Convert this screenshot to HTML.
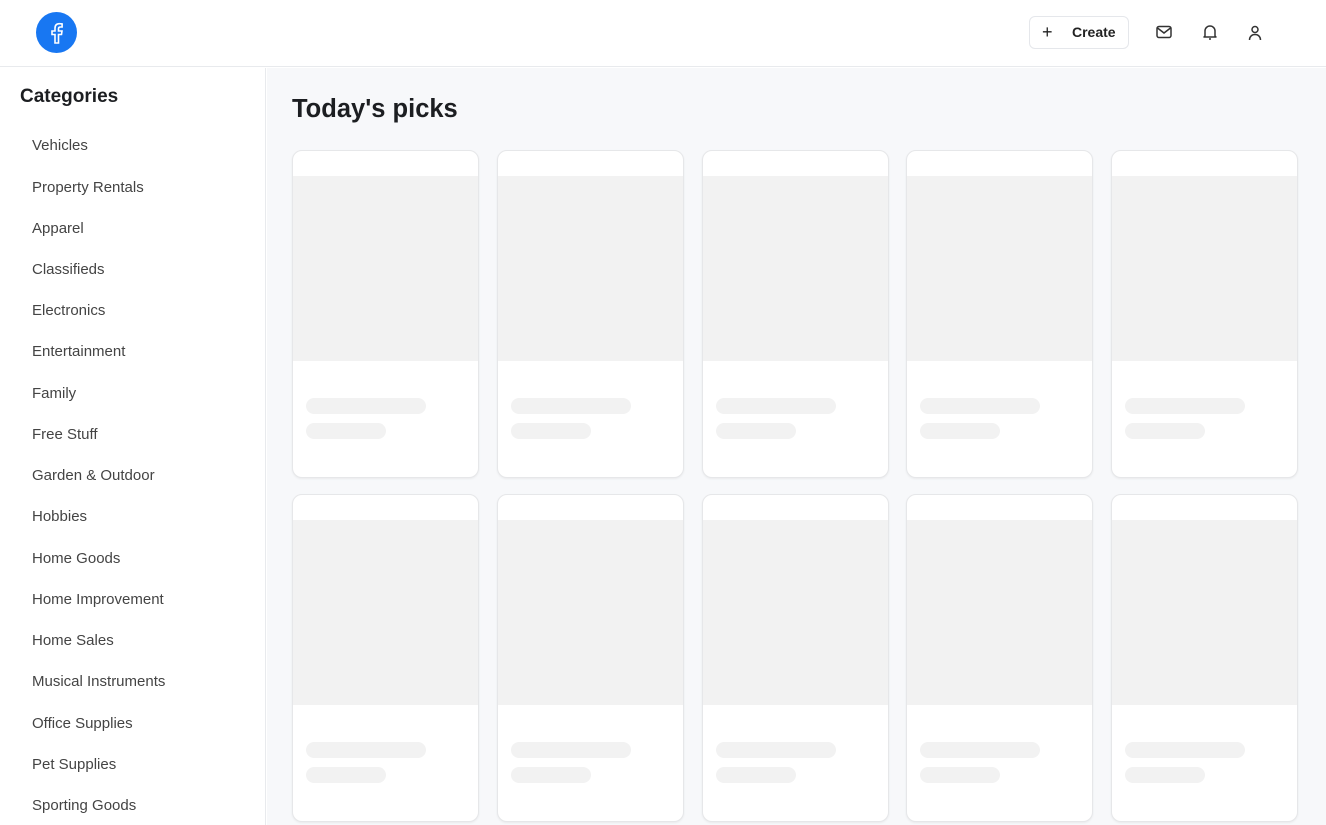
<!DOCTYPE html>
<html><head><style>
*{box-sizing:border-box;margin:0;padding:0}
body{width:1326px;height:825px;overflow:hidden;font-family:"Liberation Sans",sans-serif;background:#fff;position:relative}
.hdr{position:absolute;left:0;top:0;width:1326px;height:67px;border-bottom:1px solid #e8eaed;background:#fff}
.logo{position:absolute;left:36px;top:12px;width:41px;height:41px;border-radius:50%;background:#1877f2}
.btn{position:absolute;left:1029px;top:16px;width:100px;height:33px;border:1px solid #e5e7eb;border-radius:6px;font-size:14px;font-weight:bold;color:#222;line-height:31px}
.side{position:absolute;left:0;top:68px;width:266px;height:757px;border-right:1px solid #e8eaed;background:#fff}
.side h2{position:absolute;left:20px;top:18px;font-size:19px;color:#1c1e21}
.side div{position:absolute;left:32px;font-size:15px;color:#444}
.main{position:absolute;left:267px;top:68px;width:1059px;height:757px;background:#f7f8fa}
.main h1{position:absolute;left:25px;top:27px;font-size:25.5px;color:#1c1e21}
.card{position:absolute;width:187px;height:328px;background:#fff;border:1px solid #e6e7e9;border-radius:10px;box-shadow:0 1px 2px rgba(0,0,0,.06);overflow:hidden}
.card .img{position:absolute;left:0;top:25px;width:100%;height:185px;background:#f2f2f2}
.card .b1{position:absolute;left:13px;top:247px;width:120px;height:16px;border-radius:8px;background:#f2f2f2}
.card .b2{position:absolute;left:13px;top:272px;width:80px;height:16px;border-radius:8px;background:#f2f2f2}
</style></head><body>
<div class="hdr">
<div class="logo"><svg width="41" height="41" viewBox="0 0 41 41"><path d="M22.5 31v-8.5h3l.5-3.5h-3.5v-2.3c0-1 .4-1.7 1.8-1.7h1.8v-3.1c-.4-.1-1.5-.2-2.7-.2-2.8 0-4.4 1.6-4.4 4.6V19h-3v3.5h3V31z" fill="none" stroke="#fff" stroke-width="1.6"/></svg></div>
<div class="btn"><span style="position:absolute;left:12px;font-weight:normal;font-size:18px">+</span><span style="position:absolute;left:42px">Create</span></div>
<svg style="position:absolute;left:1156px;top:25px" width="16" height="14" viewBox="0 0 16 14"><rect x="1" y="1.5" width="14" height="11" rx="2" fill="none" stroke="#333" stroke-width="1.5"/><path d="M1.5 3l6.5 5 6.5-5" fill="none" stroke="#333" stroke-width="1.5"/></svg>
<svg style="position:absolute;left:1202px;top:24px" width="16" height="17" viewBox="0 0 16 17"><path d="M3 12V7a5 5 0 0110 0v5l1 1H2z" fill="none" stroke="#333" stroke-width="1.5" stroke-linejoin="round"/><path d="M7 15h2" stroke="#333" stroke-width="1.5"/></svg>
<svg style="position:absolute;left:1247px;top:25px" width="16" height="16" viewBox="0 0 16 16"><circle cx="8" cy="4.5" r="3" fill="none" stroke="#333" stroke-width="1.5"/><path d="M2.5 15c0-3.5 2.5-5.5 5.5-5.5s5.5 2 5.5 5.5" fill="none" stroke="#333" stroke-width="1.5"/></svg>
</div>
<div class="side"><h2>Categories</h2>
<div style="top:69px">Vehicles</div><div style="top:111px">Property Rentals</div><div style="top:152px">Apparel</div><div style="top:193px">Classifieds</div><div style="top:234px">Electronics</div><div style="top:275px">Entertainment</div><div style="top:317px">Family</div><div style="top:358px">Free Stuff</div><div style="top:399px">Garden &amp; Outdoor</div><div style="top:440px">Hobbies</div><div style="top:482px">Home Goods</div><div style="top:523px">Home Improvement</div><div style="top:564px">Home Sales</div><div style="top:605px">Musical Instruments</div><div style="top:647px">Office Supplies</div><div style="top:688px">Pet Supplies</div><div style="top:729px">Sporting Goods</div>
</div>
<div class="main"><h1>Today's picks</h1></div>
<div id="cards"></div>
<script>
var h='';[150,494].forEach(function(t){[292,497,702,906,1111].forEach(function(l){h+='<div class="card" style="left:'+l+'px;top:'+t+'px"><div class="img"></div><div class="b1"></div><div class="b2"></div></div>';});});
document.getElementById('cards').innerHTML=h;
</script>
</body></html>
